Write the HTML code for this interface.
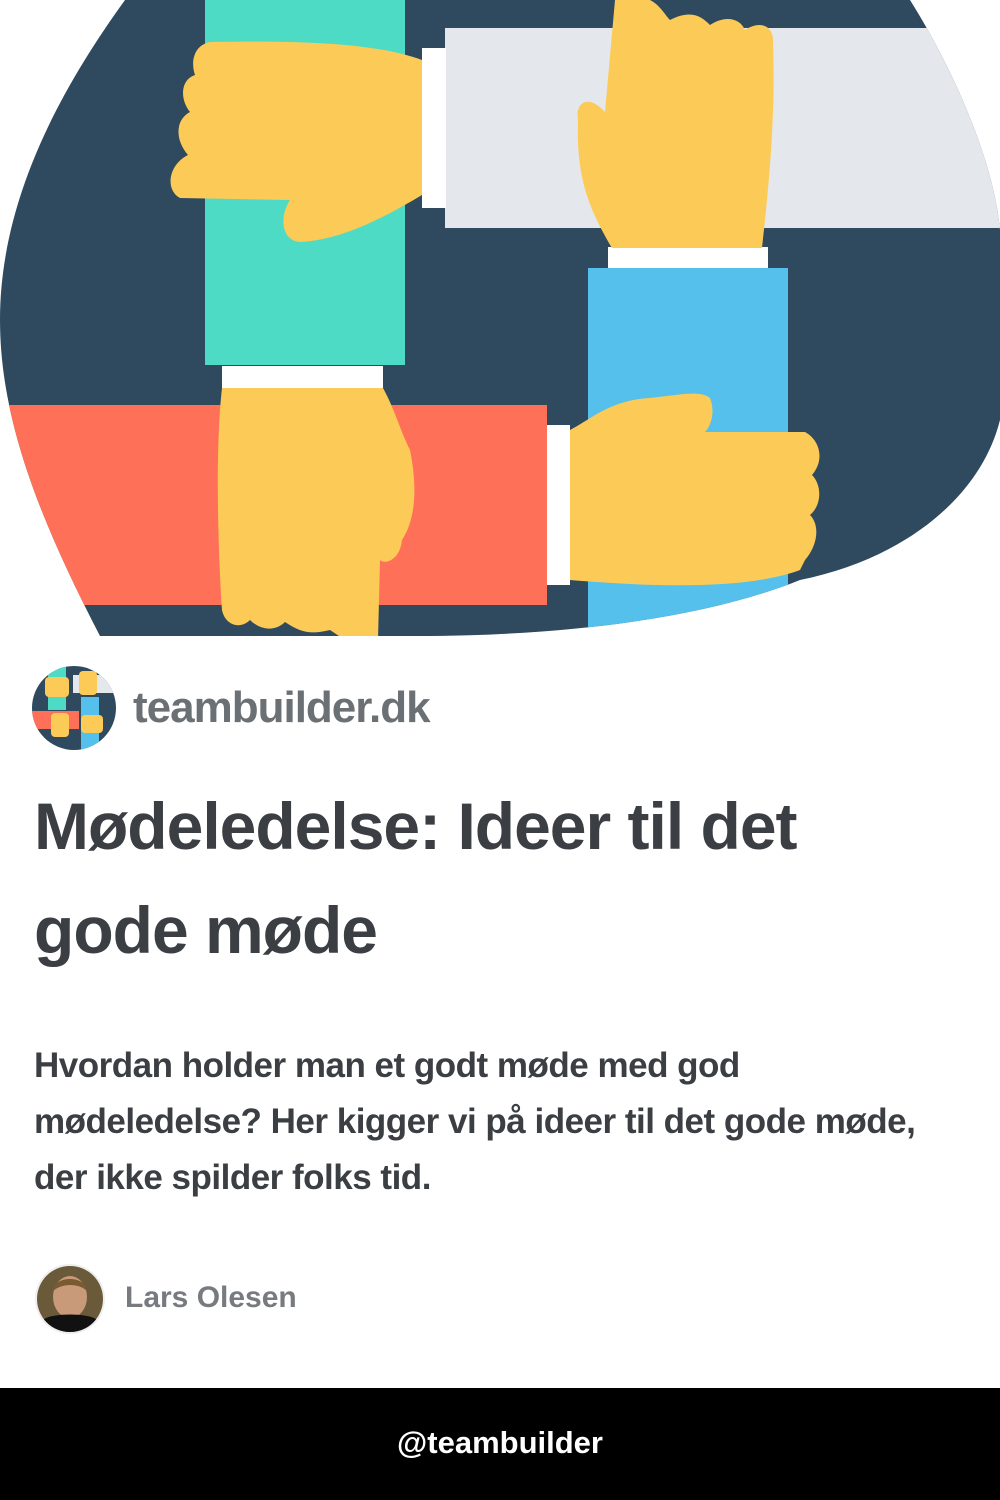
<!DOCTYPE html>
<html><head><meta charset="utf-8"><style>
body{margin:0;width:1000px;height:1500px;background:#fff;font-family:"Liberation Sans",Arial,sans-serif;position:relative;overflow:hidden}
.t{position:absolute;left:34px;color:#3b3e42;font-weight:bold;letter-spacing:-1px}
</style></head><body>
<svg width="1000" height="640" style="position:absolute;left:0;top:0">
<defs><clipPath id="c"><path d="M125,0 L910,0 C960,80 995,170 1000,230 L1000,420 C980,500 900,560 800,580 C700,620 560,635 430,636 L100,636 C40,520 0,420 0,320 C0,200 60,90 125,0 Z"/></clipPath></defs>
<g clip-path="url(#c)">
<rect width="1000" height="640" fill="#2f4a5f"/>
<rect x="205" y="0" width="200" height="365" fill="#4ddbc6"/>
<rect x="222" y="366" width="161" height="22" fill="#fff"/>
<rect x="445" y="28" width="555" height="200" fill="#e4e7ec"/>
<rect x="422" y="48" width="24" height="160" fill="#fff"/>
<rect x="588" y="268" width="200" height="372" fill="#55c0eb"/>
<rect x="608" y="247" width="160" height="21" fill="#fff"/>
<rect x="0" y="405" width="547" height="200" fill="#ff7058"/>
<rect x="547" y="425" width="23" height="160" fill="#fff"/>
<g fill="#fccb57">
<path d="M422,60 C380,45 320,40 210,42 C195,45 190,60 195,75 C180,80 180,100 190,112 C175,120 175,140 188,155 C168,165 165,190 180,198 L290,200 C280,215 280,240 300,242 C340,240 380,220 422,195 Z"/>
<path d="M612,248 C590,210 576,180 578,120 C575,100 590,95 605,112 L615,0 L650,0 C660,5 665,15 670,20 C690,10 700,15 710,25 C725,15 740,18 745,30 C760,20 775,25 773,45 C775,100 772,160 762,248 Z"/>
<path d="M222,388 C215,450 218,550 222,610 C225,625 240,630 250,620 C260,630 275,632 285,622 C300,632 310,635 330,630 L345,640 L378,640 L380,560 C385,565 400,560 402,540 C415,520 418,490 410,450 C400,430 395,410 383,388 Z"/>
<path d="M570,430 C590,420 610,400 650,398 C680,395 700,390 710,398 C715,410 712,425 705,432 L805,432 C820,440 825,460 812,475 C822,485 822,505 810,515 C820,525 818,545 805,560 L800,570 C760,585 690,590 570,580 Z"/>
</g>
</g>
</svg>
<svg width="86" height="86" style="position:absolute;left:31px;top:665px">
<defs><clipPath id="l"><circle cx="43" cy="43" r="42"/></clipPath></defs>
<g clip-path="url(#l)"><rect width="86" height="86" fill="#2f4a5f"/>
<rect x="17" y="0" width="18" height="45" fill="#4ddbc6"/><rect x="42" y="10" width="44" height="18" fill="#e4e7ec"/>
<rect x="50" y="32" width="18" height="54" fill="#55c0eb"/><rect x="0" y="46" width="48" height="18" fill="#ff7058"/>
<g fill="#fccb57"><rect x="14" y="12" width="24" height="20" rx="4"/><rect x="48" y="6" width="18" height="24" rx="4"/><rect x="20" y="48" width="18" height="24" rx="4"/><rect x="50" y="50" width="22" height="18" rx="4"/></g></g>
</svg>
<div style="position:absolute;left:133px;top:683px;font-size:44px;font-weight:bold;color:#6b7075;letter-spacing:-1px">teambuilder.dk</div>
<div class="t" style="top:774px;font-size:66px;line-height:104px">Mødeledelse: Ideer til det<br>gode møde</div>
<div class="t" style="top:1038px;font-size:35px;line-height:56px;letter-spacing:-0.5px">Hvordan holder man et godt møde med god<br>mødeledelse? Her kigger vi på ideer til det gode møde,<br>der ikke spilder folks tid.</div>
<svg width="72" height="72" style="position:absolute;left:34px;top:1263px">
<defs><clipPath id="a"><circle cx="36" cy="36" r="33"/></clipPath></defs>
<circle cx="36" cy="36" r="35" fill="#eee"/>
<g clip-path="url(#a)"><rect width="72" height="72" fill="#6b5a3a"/><ellipse cx="36" cy="34" rx="17" ry="21" fill="#c99a7a"/><path d="M0,72 L10,56 C20,50 52,50 62,56 L72,72Z" fill="#111"/><path d="M19,28 C20,12 52,12 53,28 C45,20 28,20 19,28Z" fill="#7a5a30"/></g>
</svg>
<div style="position:absolute;left:125px;top:1281px;font-size:30px;font-weight:bold;color:#777b80">Lars Olesen</div>
<div style="position:absolute;left:0;top:1388px;width:1000px;height:112px;background:#000;color:#fff;font-size:31px;font-weight:bold;text-align:center;line-height:110px">@teambuilder</div>
</body></html>
